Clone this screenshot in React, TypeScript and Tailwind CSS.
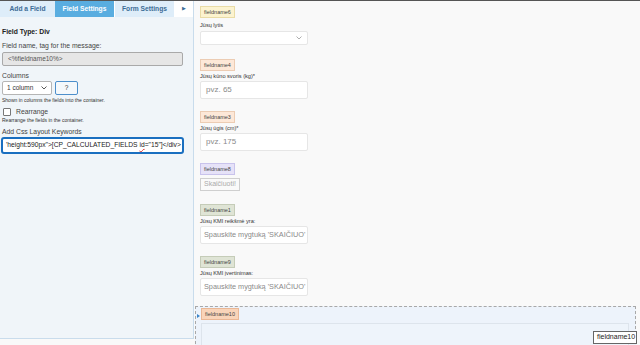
import React from "react";

const font = { fontFamily: '"Liberation Sans", Arial, sans-serif' } as const;

function Badge({ name, cls }: { name: string; cls: string }) {
  return (
    <div className="flex">
      <div className={`h-[12px] px-[3px] flex items-center text-[5.5px] text-[#444] border ${cls}`}>{name}</div>
    </div>
  );
}

function Field({ name, cls, label, placeholder, last, small }: { name: string; cls: string; label: string; placeholder: string; last?: boolean; small?: boolean }) {
  return (
    <div className={last ? "mb-[10px]" : "mb-[12px]"}>
      <Badge name={name} cls={cls} />
      <div className="h-[10px] flex items-end pb-[1px] text-[5.6px] text-[#333] leading-none">{label}</div>
      <div className={`w-[108px] h-[18px] bg-white border border-[#e6e6e6] rounded-[2px] flex items-center overflow-hidden whitespace-nowrap text-[#8a8a8a] ${small ? "pl-[3px] text-[7.3px]" : "pl-[5px] text-[8px]"}`}>
        {placeholder}
      </div>
    </div>
  );
}

export default function App() {
  return (
    <div style={font} className="w-[640px] h-[345px] overflow-hidden bg-[#f9f9f9] border-t border-[#555] flex relative">
      {/* Left panel */}
      <div className="w-[194px] h-[338px] bg-[#f0f5f9] border-r border-b border-[#c9dcec] flex flex-col shrink-0">
        <div className="flex h-[16px] bg-white">
          <div className="w-[55px] bg-[#deedf9] text-[#3c6c96] font-bold text-[6.7px] flex items-center justify-center">Add a Field</div>
          <div className="w-[59px] bg-[#59ade0] text-white font-bold text-[6.7px] flex items-center justify-center">Field Settings</div>
          <div className="w-[59px] ml-[1px] bg-[#deedf9] text-[#3c6c96] font-bold text-[6.7px] flex items-center justify-center">Form Settings</div>
          <div className="flex-1 flex items-center justify-center text-[#3c6c96] text-[5px]">▶</div>
        </div>
        <div className="px-[2px] pt-[10px] text-[#333]">
          <div className="text-[6.8px] font-bold h-[10px] leading-[10px] text-[#222]">Field Type: Div</div>
          <div className="mt-[4px] text-[6.8px] h-[10px] leading-[10px] text-[#444]">Field name, tag for the message:</div>
          <div className="mt-[1px] w-[181px] h-[14px] bg-[#e6e6e6] border border-[#a9a9a9] rounded-[2px] flex items-center pl-[5px] text-[6.5px] text-[#555]">&lt;%fieldname10%&gt;</div>
          <div className="mt-[5px] text-[6.8px] h-[10px] leading-[10px] text-[#444]">Columns</div>
          <div className="flex gap-[3px] mt-[0px]">
            <div className="w-[50px] h-[14px] bg-white border border-[#b5b5b5] rounded-[2px] flex items-center justify-between px-[4px] text-[6.5px] text-[#333]">
              <span>1 column</span>
              <svg width="6" height="4" viewBox="0 0 6 4"><path d="M0.5 0.5 L3 3 L5.5 0.5" fill="none" stroke="#444" strokeWidth="0.9" /></svg>
            </div>
            <div className="w-[23px] h-[14px] bg-[#f4f8fb] border border-[#4d8fcb] rounded-[2px] flex items-center justify-center text-[6.5px] text-[#333]">?</div>
          </div>
          <div className="mt-[1px] text-[5px] h-[8px] leading-[8px] text-[#333]">Shown in columns the fields into the container.</div>
          <div className="mt-[3px] flex items-center h-[10px]">
            <div className="w-[8px] h-[8px] ml-[1px] bg-white border border-[#777] rounded-[1px]" />
            <span className="ml-[5px] text-[6.8px] text-[#444]">Rearrange</span>
          </div>
          <div className="text-[5px] h-[7px] leading-[7px] text-[#333]">Rearrange the fields in the container.</div>
          <div className="mt-[3px] text-[6.8px] h-[10px] leading-[10px] text-[#444]">Add Css Layout Keywords</div>
          <div className="ml-[-1px] w-[183px] h-[17px] bg-white border-2 border-[#1a6fc0] rounded-[3px] flex items-center pl-[3px] overflow-hidden whitespace-nowrap text-[6.7px] text-[#222]">
            <span>'height:590px"&gt;[CP_CALCULATED_FIELDS <span className="underline decoration-wavy decoration-[#d33]">id</span>="15"]&lt;/div&gt;</span>
          </div>
        </div>
      </div>

      {/* Right area */}
      <div className="flex-1 flex flex-col pt-[5px]">
        <div className="pl-[6px]">
          <div className="mb-[14px]">
            <Badge name="fieldname6" cls="bg-[#fcf3cf] border-[#e9dca6]" />
            <div className="h-[13px] flex items-end pb-[2px] text-[5.6px] text-[#333] leading-none">Jūsų lytis</div>
            <div className="w-[108px] h-[14px] bg-white border border-[#e6e6e6] rounded-[2px] flex items-center justify-end pr-[5px]">
              <svg width="6" height="4" viewBox="0 0 6 4"><path d="M0.5 0.5 L3 3 L5.5 0.5" fill="none" stroke="#999" strokeWidth="0.8" /></svg>
            </div>
          </div>
          <Field name="fieldname4" cls="bg-[#fde8d8] border-[#ecccb3]" label="Jūsų kūno svoris (kg)*" placeholder="pvz. 65" />
          <Field name="fieldname3" cls="bg-[#fde8d8] border-[#ecccb3]" label="Jūsų ūgis (cm)*" placeholder="pvz. 175" />
          <div className="mb-[13px]">
            <Badge name="fieldname8" cls="bg-[#e6e2f8] border-[#c9c3ec]" />
            <div className="mt-[3px] flex">
              <div className="h-[13px] px-[3px] bg-[#fafafa] border border-[#cfcfcf] flex items-center text-[7px] text-[#aaa]">Skaičiuoti!</div>
            </div>
          </div>
          <Field name="fieldname1" cls="bg-[#dfe4d5] border-[#c5ccb8]" label="Jūsų KMI reikšmė yra:" placeholder="Spauskite mygtuką 'SKAIČIUO'" small />
          <Field name="fieldname9" cls="bg-[#dfe4d5] border-[#c5ccb8]" label="Jūsų KMI įvertinimas:" placeholder="Spauskite mygtuką 'SKAIČIUO'" small last />
        </div>
        <div className="ml-[1px] mr-[4px] flex-1 border border-dashed border-[#a8a8a8] bg-[#edf3fb] pt-[1px] pl-[5px] pr-[6px] relative">
          <div className="absolute left-[1px] top-[7px] w-0 h-0 border-y-[2.5px] border-y-transparent border-l-[3px] border-l-[#3a84c8]" />
          <Badge name="fieldname10" cls="bg-[#f9d4b9] border-[#eab795]" />
          <div className="mt-[3px] h-[40px] border border-[#dde4ec] bg-[#eef4fb]" />
        </div>
      </div>

      <div className="absolute left-[593px] top-[330px] h-[13px] pl-[3px] pr-[1px] bg-white border border-[#666] flex items-center text-[7px] text-[#222]">fieldname10</div>
    </div>
  );
}
